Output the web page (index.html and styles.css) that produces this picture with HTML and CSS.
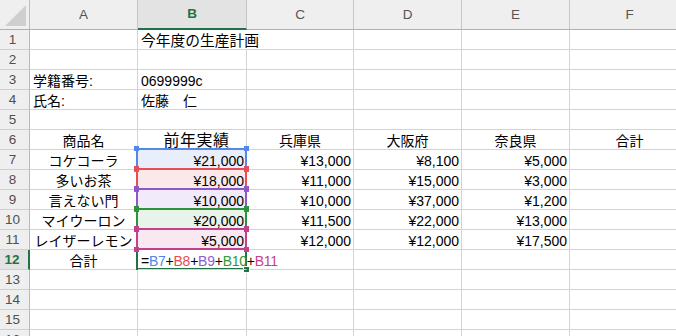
FILE: index.html
```html
<!DOCTYPE html>
<html lang="ja">
<head>
<meta charset="utf-8">
<title>Sheet</title>
<link rel="stylesheet" href="styles.css">
</head>
<body>
<div class="sheet">
  <div class="grid">
    <div class="corner"><span class="tri"></span></div>
    <div class="ch">A</div><div class="ch sel">B</div><div class="ch">C</div><div class="ch">D</div><div class="ch">E</div><div class="ch last">F</div>

    <div class="rh">1</div><div class="c"></div><div class="c ov title">今年度の生産計画</div><div class="c"></div><div class="c"></div><div class="c"></div><div class="c last"></div>
    <div class="rh">2</div><div class="c"></div><div class="c"></div><div class="c"></div><div class="c"></div><div class="c"></div><div class="c last"></div>
    <div class="rh">3</div><div class="c">学籍番号:</div><div class="c">0699999c</div><div class="c"></div><div class="c"></div><div class="c"></div><div class="c last"></div>
    <div class="rh">4</div><div class="c">氏名:</div><div class="c">佐藤　仁</div><div class="c"></div><div class="c"></div><div class="c"></div><div class="c last"></div>
    <div class="rh">5</div><div class="c"></div><div class="c"></div><div class="c"></div><div class="c"></div><div class="c"></div><div class="c last"></div>
    <div class="rh">6</div><div class="c ctr">商品名</div><div class="c ctr wide">前年実績</div><div class="c ctr">兵庫県</div><div class="c ctr">大阪府</div><div class="c ctr">奈良県</div><div class="c ctr last">合計</div>
    <div class="rh">7</div><div class="c ctr">コケコーラ</div><div class="c num t-blue">¥21,000</div><div class="c num">¥13,000</div><div class="c num">¥8,100</div><div class="c num">¥5,000</div><div class="c last"></div>
    <div class="rh">8</div><div class="c ctr">多いお茶</div><div class="c num t-red">¥18,000</div><div class="c num">¥11,000</div><div class="c num">¥15,000</div><div class="c num">¥3,000</div><div class="c last"></div>
    <div class="rh">9</div><div class="c ctr">言えない門</div><div class="c num t-purple">¥10,000</div><div class="c num">¥10,000</div><div class="c num">¥37,000</div><div class="c num">¥1,200</div><div class="c last"></div>
    <div class="rh">10</div><div class="c ctr">マイウーロン</div><div class="c num t-green">¥20,000</div><div class="c num">¥11,500</div><div class="c num">¥22,000</div><div class="c num">¥13,000</div><div class="c last"></div>
    <div class="rh">11</div><div class="c ctr">レイザーレモン</div><div class="c num t-pink">¥5,000</div><div class="c num">¥12,000</div><div class="c num">¥12,000</div><div class="c num">¥17,500</div><div class="c last"></div>
    <div class="rh act">12</div><div class="c ctr">合計</div><div class="c ov formula">=<span class="f-blue">B7</span>+<span class="f-red">B8</span>+<span class="f-purple">B9</span>+<span class="f-green">B10</span>+<span class="f-pink">B11</span></div><div class="c"></div><div class="c"></div><div class="c"></div><div class="c last"></div>
    <div class="rh">13</div><div class="c"></div><div class="c"></div><div class="c"></div><div class="c"></div><div class="c"></div><div class="c last"></div>
    <div class="rh">14</div><div class="c"></div><div class="c"></div><div class="c"></div><div class="c"></div><div class="c"></div><div class="c last"></div>
    <div class="rh">15</div><div class="c"></div><div class="c"></div><div class="c"></div><div class="c"></div><div class="c"></div><div class="c last"></div>
    <div class="rh">16</div><div class="c"></div><div class="c"></div><div class="c"></div><div class="c"></div><div class="c"></div><div class="c last"></div>
  </div>

  <div class="active"><span class="fill"></span></div>
  <div class="range r-blue r7"><i class="h tl"></i><i class="h tr"></i><i class="h bl"></i><i class="h br"></i></div>
  <div class="range r-red r8"><i class="h tl"></i><i class="h tr"></i><i class="h bl"></i><i class="h br"></i></div>
  <div class="range r-purple r9"><i class="h tl"></i><i class="h tr"></i><i class="h bl"></i><i class="h br"></i></div>
  <div class="range r-green r10"><i class="h tl"></i><i class="h tr"></i><i class="h bl"></i><i class="h br"></i></div>
  <div class="range r-pink r11"><i class="h tl"></i><i class="h tr"></i><i class="h bl"></i><i class="h br"></i></div>
</div>
</body>
</html>
```

FILE: styles.css
```css
html, body {
  margin: 0;
  padding: 0;
  background: #ffffff;
  overflow: hidden;
}
.sheet {
  position: relative;
  width: 676px;
  height: 336px;
  overflow: hidden;
  font-family: "Liberation Sans", "Noto Sans CJK JP", sans-serif;
  color: #000;
}
.grid {
  display: grid;
  grid-template-columns: 30px 108px 109px 107px 108px 108px 120px;
  grid-template-rows: 30px repeat(16, 20px);
}
.grid > div {
  box-sizing: border-box;
  border-right: 1px solid #d3d3d3;
  border-bottom: 1px solid #d3d3d3;
  white-space: nowrap;
  overflow: visible;
  min-width: 0;
}
.corner {
  position: relative;
  background: #efefef;
  border-right-color: #bdbdbd !important;
  border-bottom-color: #b0b0b0 !important;
}
.tri {
  position: absolute;
  right: 3px;
  bottom: 3px;
  width: 0;
  height: 0;
  border-left: 21px solid transparent;
  border-bottom: 21px solid #cfcfcf;
}
.ch {
  background: #efefef;
  border-right-color: #c6c6c6 !important;
  border-bottom-color: #b0b0b0 !important;
  text-align: center;
  font-size: 13.5px;
  line-height: 29px;
  color: #555;
}
.ch.sel {
  background: #e3e3e3;
  color: #217346;
  font-weight: bold;
  border-bottom: 2px solid #217346 !important;
  line-height: 28px;
}
.rh {
  background: #efefef;
  border-right-color: #b8b8b8 !important;
  border-bottom-color: #cfcfcf !important;
  text-align: center;
  padding-right: 4px;
  font-size: 13.5px;
  line-height: 20px;
  color: #505050;
}
.rh.act {
  background: #e3e3e3;
  color: #217346;
  font-weight: bold;
  border-right: 2px solid #217346 !important;
}
.c {
  font-size: 14px;
  line-height: 18px;
  padding: 2px 3px 0 3px;
}
.c.title { font-size: 14.75px; }
.c.ctr { text-align: center; }
.c.wide { font-size: 16px; letter-spacing: 0.5px; padding-left: 12px; line-height: 17px; }
.c.num { text-align: right; padding-right: 2px; }
.c.ov {
  border-right-color: transparent !important;
  position: relative;
  z-index: 1;
}
.c.formula { z-index: 3; letter-spacing: -0.25px; }

.t-blue { background: #e9eefb; }
.t-red { background: #fbe9ea; }
.t-purple { background: #f0eafa; }
.t-green { background: #e8f3e9; }
.t-pink { background: #f9e8f2; }

.f-blue { color: #4f86e8; }
.f-red { color: #ea4a55; }
.f-purple { color: #8f5cd2; }
.f-green { color: #2f9a3d; }
.f-pink { color: #c63f8d; }

.active {
  position: absolute;
  left: 136px;
  top: 248px;
  width: 111px;
  height: 22px;
  box-sizing: border-box;
  border: 2px solid #217346;
  z-index: 2;
}
.fill {
  position: absolute;
  right: -5px;
  bottom: -5px;
  width: 5px;
  height: 5px;
  background: #217346;
  border: 1px solid #fff;
}
.range {
  position: absolute;
  left: 136px;
  width: 111px;
  height: 22px;
  box-sizing: border-box;
  border: 2px solid;
  z-index: 4;
}
.r7 { top: 148px; border-color: #5587e4; }
.r8 { top: 168px; border-color: #e64f57; }
.r9 { top: 188px; border-color: #8d57c8; }
.r10 { top: 208px; border-color: #2e923a; }
.r11 { top: 228px; border-color: #c3408b; }
.h {
  position: absolute;
  width: 5px;
  height: 5px;
}
.r-blue .h { background: #5587e4; }
.r-red .h { background: #e64f57; }
.r-purple .h { background: #8d57c8; }
.r-green .h { background: #2e923a; }
.r-pink .h { background: #c3408b; }
.h.tl { left: -4px; top: -4px; }
.h.tr { right: -4px; top: -4px; }
.h.bl { left: -4px; bottom: -4px; }
.h.br { right: -4px; bottom: -4px; }
```
